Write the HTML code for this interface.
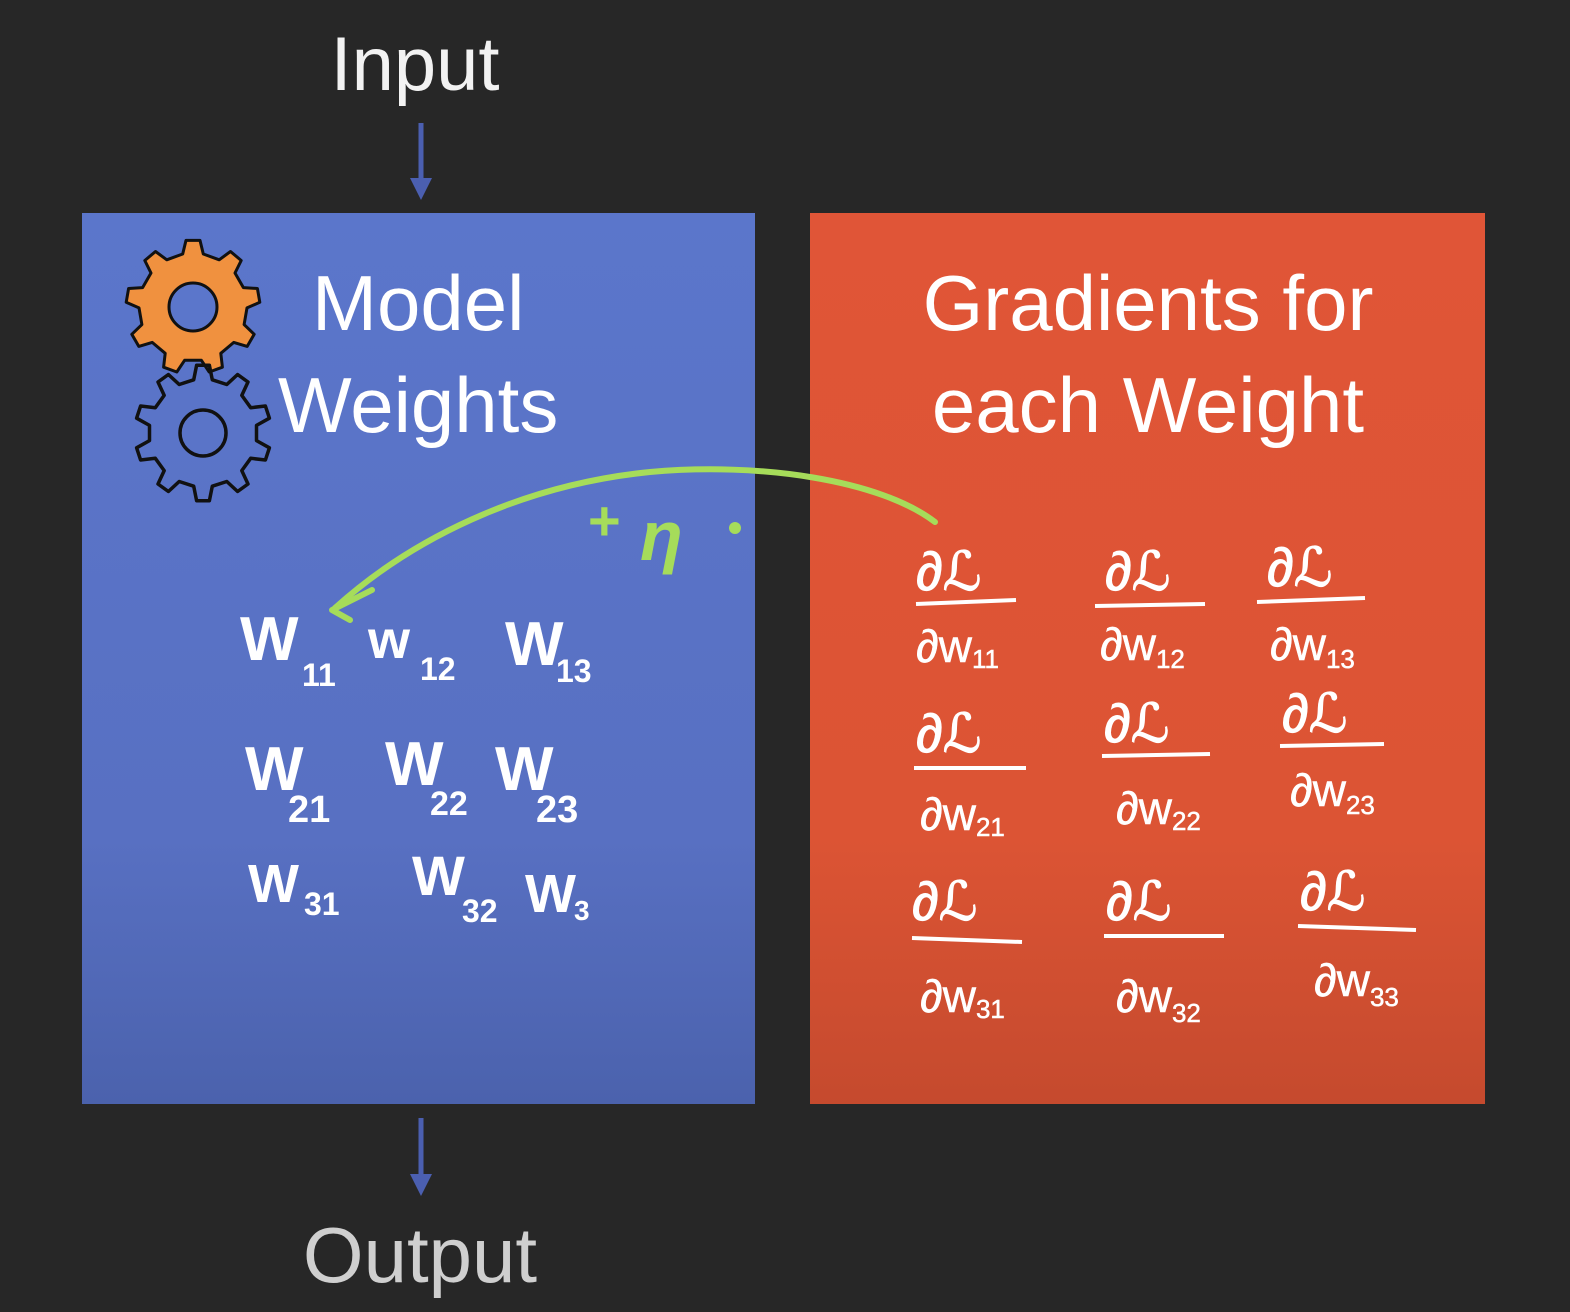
<!DOCTYPE html>
<html><head><meta charset="utf-8"><style>
html,body{margin:0;padding:0;background:#272727;}
svg{display:block}
text{font-family:"Liberation Sans","DejaVu Sans",sans-serif;}
.h{font-family:"DejaVu Sans","Liberation Sans",sans-serif;fill:#fff;font-weight:bold}
</style></head><body>
<svg width="1570" height="1312" viewBox="0 0 1570 1312" xmlns="http://www.w3.org/2000/svg">
<defs>
<linearGradient id="bg" x1="0" y1="0" x2="0" y2="1"><stop offset="0" stop-color="#5b76cb"/><stop offset="0.7" stop-color="#5870c2"/><stop offset="1" stop-color="#4b62ad"/></linearGradient>
<linearGradient id="rg" x1="0" y1="0" x2="0" y2="1"><stop offset="0" stop-color="#e05537"/><stop offset="0.7" stop-color="#dc5434"/><stop offset="1" stop-color="#c54a2e"/></linearGradient>
</defs>
<rect width="1570" height="1312" fill="#272727"/>
<text x="415" y="90" font-size="76" fill="#f2f2f2" text-anchor="middle">Input</text>
<line x1="421" y1="123" x2="421" y2="190" stroke="#4b5fb0" stroke-width="5"/>
<polygon points="410,178 432,178 421,200" fill="#4b5fb0"/>
<rect x="82" y="213" width="673" height="891" fill="url(#bg)"/>
<rect x="810" y="213" width="675" height="891" fill="url(#rg)"/>
<line x1="421" y1="1118" x2="421" y2="1185" stroke="#4b5fb0" stroke-width="5"/>
<polygon points="410,1174 432,1174 421,1196" fill="#4b5fb0"/>
<text x="420" y="1282" font-size="78" fill="#cfcfcf" text-anchor="middle">Output</text>

<path id="g1" fill="#f0913f" stroke="#111" stroke-width="3" stroke-linejoin="round"/>
<circle cx="193" cy="307" r="24" fill="#5b76cb" stroke="#111" stroke-width="3"/>
<path id="g2" fill="none" stroke="#111" stroke-width="3.5" stroke-linejoin="round"/>
<circle cx="203" cy="433" r="23" fill="none" stroke="#111" stroke-width="3.5"/>

<text x="312" y="330" font-size="78" fill="#fff">Model</text>
<text x="278" y="432" font-size="78" fill="#fff">Weights</text>
<text x="1148" y="330" font-size="78" fill="#fff" text-anchor="middle">Gradients for</text>
<text x="1148" y="432" font-size="78" fill="#fff" text-anchor="middle">each Weight</text>

<path d="M935,522 C880,480 760,462 650,472 C520,485 410,540 335,608" fill="none" stroke="#a6dc5a" stroke-width="6" stroke-linecap="round"/>
<path d="M372,590 L332,610 L350,620" fill="none" stroke="#a6dc5a" stroke-width="6" stroke-linecap="round" stroke-linejoin="round"/>
<text x="588" y="540" font-size="56" fill="#a6dc5a" font-weight="bold">+</text>
<text x="640" y="560" font-size="70" fill="#a6dc5a" font-weight="bold" font-style="italic">η</text>
<circle cx="735" cy="528" r="6" fill="#a6dc5a"/>

<g class="h" font-size="62">
<text x="240" y="660">W</text><text x="302" y="686" font-size="32">11</text>
<text x="368" y="658" font-size="54">w</text><text x="420" y="680" font-size="32">12</text>
<text x="505" y="665">W</text><text x="556" y="682" font-size="32">13</text>
<text x="245" y="790">W</text><text x="288" y="822" font-size="38">21</text>
<text x="385" y="785">W</text><text x="430" y="815" font-size="34">22</text>
<text x="495" y="790">W</text><text x="536" y="822" font-size="38">23</text>
<text x="248" y="902" font-size="54">W</text><text x="304" y="915" font-size="32">31</text>
<text x="412" y="895" font-size="56">W</text><text x="462" y="922" font-size="32">32</text>
<text x="525" y="912" font-size="54">W</text><text x="574" y="920" font-size="28">3</text>
</g>

<g fill="#fff" font-family="DejaVu Sans,sans-serif" font-size="54" stroke="#fff">
<g transform="translate(916,590)"><text x="0" y="0">∂ℒ</text><line x1="0" y1="14" x2="100" y2="10" stroke-width="4"/><text x="0" y="72" font-size="46" stroke-width="0.5">∂w<tspan font-size="26" dy="6">11</tspan></text></g>
<g transform="translate(1100,590)"><text x="5" y="0">∂ℒ</text><line x1="-5" y1="16" x2="105" y2="14" stroke-width="4"/><text x="0" y="70" font-size="46" stroke-width="0.5">∂w<tspan font-size="26" dy="8">12</tspan></text></g>
<g transform="translate(1262,586)"><text x="5" y="0">∂ℒ</text><line x1="-5" y1="16" x2="103" y2="12" stroke-width="4"/><text x="8" y="74" font-size="46" stroke-width="0.5">∂w<tspan font-size="26" dy="8">13</tspan></text></g>
<g transform="translate(916,752)"><text x="0" y="0">∂ℒ</text><line x1="-2" y1="16" x2="110" y2="16" stroke-width="4"/><text x="4" y="78" font-size="46" stroke-width="0.5">∂w<tspan font-size="26" dy="6">21</tspan></text></g>
<g transform="translate(1104,742)"><text x="0" y="0">∂ℒ</text><line x1="-2" y1="14" x2="106" y2="12" stroke-width="4"/><text x="12" y="82" font-size="46" stroke-width="0.5">∂w<tspan font-size="26" dy="6">22</tspan></text></g>
<g transform="translate(1282,732)"><text x="0" y="0">∂ℒ</text><line x1="-2" y1="14" x2="102" y2="12" stroke-width="4"/><text x="8" y="74" font-size="46" stroke-width="0.5">∂w<tspan font-size="26" dy="8">23</tspan></text></g>
<g transform="translate(912,920)"><text x="0" y="0">∂ℒ</text><line x1="0" y1="18" x2="110" y2="22" stroke-width="4"/><text x="8" y="92" font-size="46" stroke-width="0.5">∂w<tspan font-size="26" dy="6">31</tspan></text></g>
<g transform="translate(1106,920)"><text x="0" y="0">∂ℒ</text><line x1="-2" y1="16" x2="118" y2="16" stroke-width="4"/><text x="10" y="92" font-size="46" stroke-width="0.5">∂w<tspan font-size="26" dy="10">32</tspan></text></g>
<g transform="translate(1300,910)"><text x="0" y="0">∂ℒ</text><line x1="-2" y1="16" x2="116" y2="20" stroke-width="4"/><text x="14" y="86" font-size="46" stroke-width="0.5">∂w<tspan font-size="26" dy="10">33</tspan></text></g>
</g>
</svg>
<script>
function gear(cx,cy,ro,ri,n,rot){var p=[];for(var i=0;i<n;i++){var a=rot+i*2*Math.PI/n,s=Math.PI/n;
var pts=[[ri,a-s*0.55],[ro,a-s*0.3],[ro,a+s*0.3],[ri,a+s*0.55]];
pts.forEach(function(q){p.push((cx+q[0]*Math.cos(q[1])).toFixed(1)+","+(cy+q[0]*Math.sin(q[1])).toFixed(1));});}
return "M"+p.join(" L")+"Z";}
document.getElementById("g1").setAttribute("d",gear(193,307,67,54,9,-Math.PI/2));
document.getElementById("g2").setAttribute("d",gear(203,433,68,54,10,-Math.PI/2));
</script>
</body></html>
